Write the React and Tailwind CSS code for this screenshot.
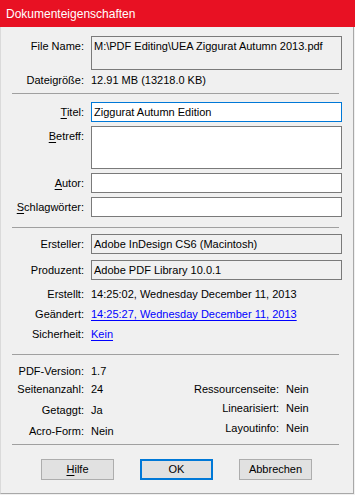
import React from "react";

const font = { fontFamily: '"Liberation Sans", Arial, sans-serif' };

function Label({ children, className = "" }) {
  return (
    <div className={"w-[83px] shrink-0 text-right " + className}>{children}</div>
  );
}

function Field({ label, height = "h-[20px]", value, readOnly, focused, className = "" }) {
  return (
    <div className={"flex gap-[7px] " + className}>
      <Label className="pt-[3px] leading-[14px]">{label}</Label>
      <div
        className={
          "w-[251px] border px-[2px] pt-[2px] leading-[14px] " +
          height +
          " " +
          (focused ? "border-[#0078d7] bg-white" : readOnly ? "border-[#7a7a7a] bg-[#f0f0f0]" : "border-[#7a7a7a] bg-white")
        }
      >
        {value}
      </div>
    </div>
  );
}

function Info({ label, children, className = "", labelW = "w-[83px]" }) {
  return (
    <div className={"flex h-[14px] items-center gap-[7px] leading-[14px] " + className}>
      <div className={labelW + " shrink-0 text-right"}>{label}</div>
      <div>{children}</div>
    </div>
  );
}

function Sep({ className = "" }) {
  return <div className={"mx-[11px] h-px w-[327px] bg-[#a0a0a0] " + className}></div>;
}

function U({ children }) {
  return <span className="underline underline-offset-2">{children}</span>;
}

export default function App() {
  return (
    <div className="h-[495px] w-[355px] bg-[#f0f0f0] text-[11px] text-black" style={font}>
      <div className="h-[494px] w-[354px] border-b border-l border-r border-b-[#a8a8a8] border-l-[#dadada] border-r-[#a8a8a8] bg-[#f0f0f0]">
        <div className="-ml-px flex h-[27px] w-[355px] items-center bg-[#e81123] pl-[6px] text-[12px] text-white">
          Dokumenteigenschaften
        </div>

        <Field className="mt-[9px]" label="File Name:" height="h-[34px]" readOnly value="M:\PDF Editing\UEA Ziggurat Autumn 2013.pdf" />
        <Info className="mt-[3px]" label="Dateigröße:">12.91 MB (13218.0 KB)</Info>

        <Sep className="mt-[6px]" />

        <Field className="mt-[8px]" label={<><U>T</U>itel:</>} focused value="Ziggurat Autumn Edition" />
        <Field className="mt-[4px]" label={<><U>B</U>etreff:</>} height="h-[43px]" value="" />
        <Field className="mt-[4px]" label={<><U>A</U>utor:</>} value="" />
        <Field className="mt-[4px]" label={<><U>S</U>chlagwörter:</>} value="" />

        <Sep className="mt-[10px]" />

        <Field className="mt-[6px]" label="Ersteller:" readOnly value="Adobe InDesign CS6 (Macintosh)" />
        <Field className="mt-[6px]" label="Produzent:" readOnly value="Adobe PDF Library 10.0.1" />
        <Info className="mt-[7px]" label="Erstellt:">14:25:02, Wednesday December 11, 2013</Info>
        <Info className="mt-[6px]" label="Geändert:">
          <span className="text-[#0000ff] underline underline-offset-2">14:25:27, Wednesday December 11, 2013</span>
        </Info>
        <Info className="mt-[6px]" label="Sicherheit:">
          <span className="text-[#0000ff] underline underline-offset-2">Kein</span>
        </Info>

        <Sep className="mt-[13px]" />

        <div className="flex">
          <div className="w-[150px]">
            <Info className="mt-[9px]" label="PDF-Version:">1.7</Info>
            <Info className="mt-[4px]" label="Seitenanzahl:">24</Info>
            <Info className="mt-[7px]" label="Getaggt:">Ja</Info>
            <Info className="mt-[7px]" label="Acro-Form:">Nein</Info>
          </div>
          <div className="pt-[27px]">
            <Info labelW="w-[128px]" label="Ressourcenseite:">Nein</Info>
            <Info className="mt-[5px]" labelW="w-[128px]" label="Linearisiert:">Nein</Info>
            <Info className="mt-[6px]" labelW="w-[128px]" label="Layoutinfo:">Nein</Info>
          </div>
        </div>

        <Sep className="mt-[6px]" />

        <div className="mt-[14px] flex">
          <button className="ml-[40px] h-[21px] w-[73px] border border-[#adadad] bg-[#e1e1e1] leading-[19px]">
            <U>H</U>ilfe
          </button>
          <button className="ml-[26px] h-[21px] w-[73px] border-2 border-[#0078d7] bg-[#e1e1e1] leading-[17px]">
            OK
          </button>
          <button className="ml-[26px] h-[21px] w-[73px] border border-[#adadad] bg-[#e1e1e1] leading-[19px]">
            Abbrechen
          </button>
        </div>
      </div>
    </div>
  );
}
